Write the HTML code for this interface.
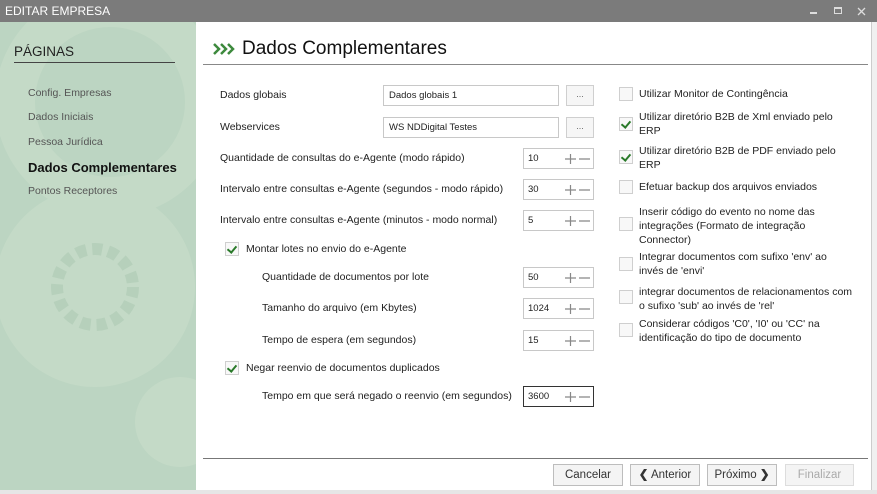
<!DOCTYPE html>
<html><head><meta charset="utf-8"><style>
*{margin:0;padding:0;box-sizing:border-box}
body{width:877px;height:494px;overflow:hidden;background:#fff;font-family:"Liberation Sans",sans-serif;font-size:10.5px;color:#222;position:relative}
.a{position:absolute;white-space:nowrap}
.tb{left:0;top:0;width:877px;height:22px;background:#7b7b7b;color:#fff;font-size:12px;line-height:22px;padding-left:5px}
.sb{left:0;top:22px;width:196px;height:468px;background:#bcd5c2;overflow:hidden}
.lbl{line-height:14px}
.in{border:1px solid #c8c8c8;background:#fff;height:21px;font-size:9.5px;line-height:19px;padding-left:5px}
.btn{border:1px solid #cfcfcf;background:#f6f6f6;height:21px;font-size:9px;text-align:center;line-height:17px;color:#666}
.spin{border:1px solid #c8c8c8;background:#fff;height:21px;width:71px;font-size:9.5px;line-height:19px;padding-left:4px}
.spin svg{position:absolute;right:2px;top:4px}
.cb{width:14px;height:14px;border:1px solid #cfcfcf;background:#f8f8f8}
.cb.k:after{content:"";position:absolute;left:3px;top:1px;width:4px;height:7px;border:solid #2a7a2a;border-width:0 2px 2px 0;transform:rotate(40deg)}
.nb{border:1px solid #bdbdbd;background:#f4f4f4;height:22px;font-size:11.5px;line-height:20px;text-align:center;color:#333}
</style></head><body>
<div class="a tb">EDITAR EMPRESA</div>
<div class="a" style="left:810px;top:12px;width:7px;height:2px;background:#ddd"></div>
<div class="a" style="left:834px;top:7px;width:8px;height:7px;border:1px solid #ddd;border-top-width:2px"></div>
<svg class="a" style="left:857px;top:7px" width="9" height="9"><path d="M1 1L8 8M8 1L1 8" stroke="#ddd" stroke-width="1.3"/></svg>
<div class="a sb">
<svg width="196" height="468" style="position:absolute;left:0;top:0">
<circle cx="110" cy="80" r="95" fill="none" stroke="#c4dac7" stroke-width="40"/>
<circle cx="95" cy="265" r="100" fill="#c4dac7"/>
<circle cx="95" cy="265" r="38" fill="none" stroke="#b6d0bb" stroke-width="12" stroke-dasharray="10 6"/>
<circle cx="180" cy="400" r="45" fill="#c4dac7"/>
</svg>
<div class="a" style="left:14px;top:22px;font-size:13.5px;color:#222">PÁGINAS</div>
<div class="a" style="left:14px;top:40px;width:161px;height:1px;background:#444"></div>
<div class="a" style="left:28px;top:65px;color:#555;font-size:10.5px">Config. Empresas</div>
<div class="a" style="left:28px;top:89px;color:#555;font-size:10.5px">Dados Iniciais</div>
<div class="a" style="left:28px;top:114px;color:#555;font-size:10.5px">Pessoa Jurídica</div>
<div class="a" style="left:28px;top:138px;color:#111;font-size:13px;font-weight:bold">Dados Complementares</div>
<div class="a" style="left:28px;top:163px;color:#555;font-size:10.5px">Pontos Receptores</div>
</div>
<div class="a" style="left:0;top:490px;width:877px;height:4px;background:#e6e6e6"></div>
<div class="a" style="left:871px;top:22px;width:6px;height:468px;background:#f0f0f0;border-left:1px solid #ccc"></div>
<svg class="a" style="left:213px;top:43px" width="26" height="12"><path d="M1 1L6 6L1 11M8 1L13 6L8 11M15 1L20 6L15 11" fill="none" stroke="#3d8a3d" stroke-width="2.5"/></svg>
<div class="a" style="left:242px;top:38px;font-size:19px;color:#111">Dados Complementares</div>
<div class="a" style="left:203px;top:64px;width:665px;height:1px;background:#888"></div>

<div class="a lbl" style="left:220px;top:88px">Dados globais</div>
<div class="a in" style="left:383px;top:85px;width:176px">Dados globais 1</div>
<div class="a btn" style="left:566px;top:85px;width:28px">...</div>
<div class="a lbl" style="left:220px;top:120px">Webservices</div>
<div class="a in" style="left:383px;top:117px;width:176px">WS NDDigital Testes</div>
<div class="a btn" style="left:566px;top:117px;width:28px">...</div>

<div class="a lbl" style="left:220px;top:151px">Quantidade de consultas do e-Agente (modo rápido)</div>
<div class="a spin" style="left:523px;top:148px">10<svg width="27" height="12"><path d="M1 6H12M6.5 1V11M15 6H26" stroke="#888" stroke-width="1.2"/></svg></div>
<div class="a lbl" style="left:220px;top:182px">Intervalo entre consultas e-Agente (segundos - modo rápido)</div>
<div class="a spin" style="left:523px;top:179px">30<svg width="27" height="12"><path d="M1 6H12M6.5 1V11M15 6H26" stroke="#888" stroke-width="1.2"/></svg></div>
<div class="a lbl" style="left:220px;top:213px">Intervalo entre consultas e-Agente (minutos - modo normal)</div>
<div class="a spin" style="left:523px;top:210px">5<svg width="27" height="12"><path d="M1 6H12M6.5 1V11M15 6H26" stroke="#888" stroke-width="1.2"/></svg></div>
<div class="a cb k" style="left:225px;top:242px"></div>
<div class="a lbl" style="left:246px;top:242px">Montar lotes no envio do e-Agente</div>
<div class="a lbl" style="left:262px;top:270px">Quantidade de documentos por lote</div>
<div class="a spin" style="left:523px;top:267px">50<svg width="27" height="12"><path d="M1 6H12M6.5 1V11M15 6H26" stroke="#888" stroke-width="1.2"/></svg></div>
<div class="a lbl" style="left:262px;top:301px">Tamanho do arquivo (em Kbytes)</div>
<div class="a spin" style="left:523px;top:298px">1024<svg width="27" height="12"><path d="M1 6H12M6.5 1V11M15 6H26" stroke="#888" stroke-width="1.2"/></svg></div>
<div class="a lbl" style="left:262px;top:333px">Tempo de espera (em segundos)</div>
<div class="a spin" style="left:523px;top:330px">15<svg width="27" height="12"><path d="M1 6H12M6.5 1V11M15 6H26" stroke="#888" stroke-width="1.2"/></svg></div>
<div class="a cb k" style="left:225px;top:361px"></div>
<div class="a lbl" style="left:246px;top:361px">Negar reenvio de documentos duplicados</div>
<div class="a lbl" style="left:262px;top:389px">Tempo em que será negado o reenvio (em segundos)</div>
<div class="a spin" style="left:523px;top:386px;border-color:#333">3600<svg width="27" height="12"><path d="M1 6H12M6.5 1V11M15 6H26" stroke="#888" stroke-width="1.2"/></svg></div>

<div class="a cb" style="left:619px;top:87px"></div>
<div class="a lbl" style="left:639px;top:87px">Utilizar Monitor de Contingência</div>
<div class="a cb k" style="left:619px;top:117px"></div>
<div class="a lbl" style="left:639px;top:110px">Utilizar diretório B2B de Xml enviado pelo<br>ERP</div>
<div class="a cb k" style="left:619px;top:150px"></div>
<div class="a lbl" style="left:639px;top:144px">Utilizar diretório B2B de PDF enviado pelo<br>ERP</div>
<div class="a cb" style="left:619px;top:180px"></div>
<div class="a lbl" style="left:639px;top:180px">Efetuar backup dos arquivos enviados</div>
<div class="a cb" style="left:619px;top:217px"></div>
<div class="a lbl" style="left:639px;top:205px">Inserir código do evento no nome das<br>integrações (Formato de integração<br>Connector)</div>
<div class="a cb" style="left:619px;top:257px"></div>
<div class="a lbl" style="left:639px;top:250px">Integrar documentos com sufixo 'env' ao<br>invés de 'envi'</div>
<div class="a cb" style="left:619px;top:290px"></div>
<div class="a lbl" style="left:639px;top:285px">integrar documentos de relacionamentos com<br>o sufixo 'sub' ao invés de 'rel'</div>
<div class="a cb" style="left:619px;top:323px"></div>
<div class="a lbl" style="left:639px;top:317px">Considerar códigos 'C0', 'I0' ou 'CC' na<br>identificação do tipo de documento</div>

<div class="a" style="left:203px;top:458px;width:665px;height:1px;background:#777"></div>
<div class="a nb" style="left:553px;top:464px;width:70px">Cancelar</div>
<div class="a nb" style="left:630px;top:464px;width:70px"><b>❮</b> Anterior</div>
<div class="a nb" style="left:707px;top:464px;width:70px">Próximo <b>❯</b></div>
<div class="a nb" style="left:785px;top:464px;width:69px;color:#aaa;border-color:#ddd">Finalizar</div>
</body></html>
